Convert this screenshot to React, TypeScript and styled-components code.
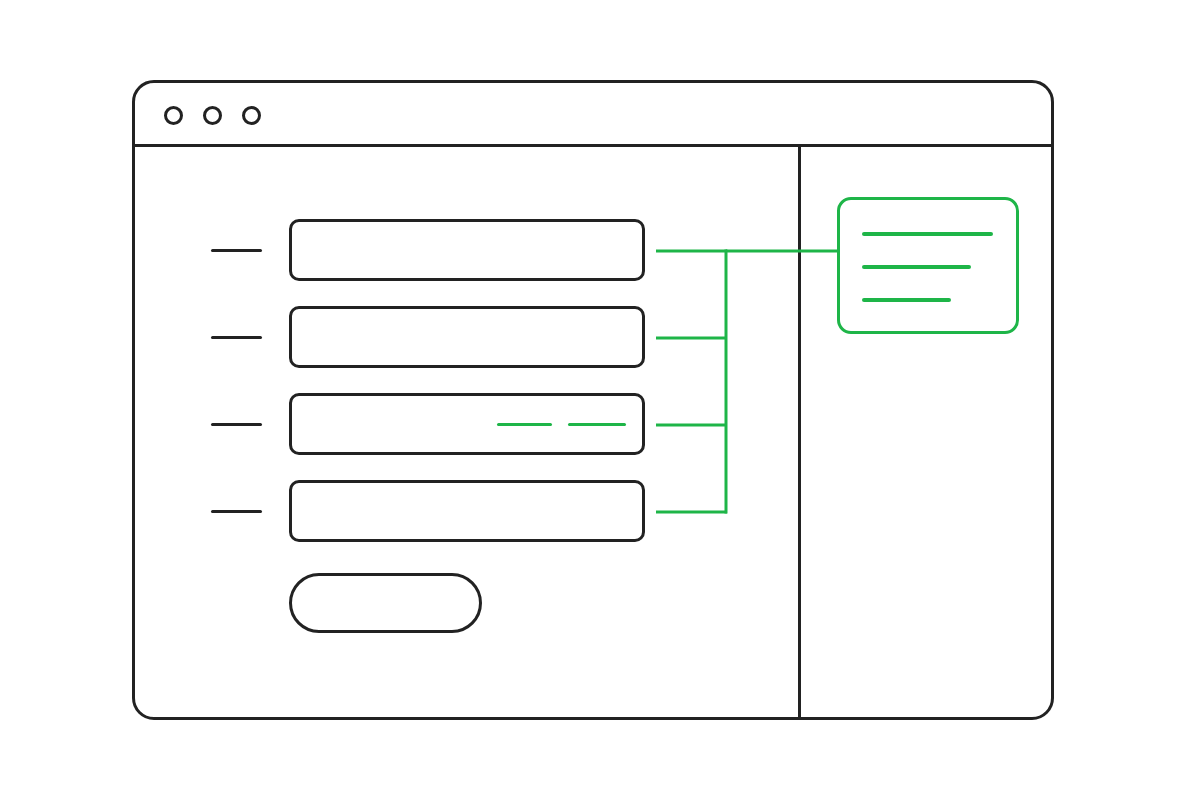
import React from "react";
import styled, { createGlobalStyle } from "styled-components";

const INK = "#222222";
const GREEN = "#1eb548";

const Global = createGlobalStyle`
  html, body { margin: 0; padding: 0; background: #ffffff; }
  body { font-family: "Liberation Sans", Arial, sans-serif; }
`;

const Page = styled.div`
  width: 1200px;
  height: 800px;
  box-sizing: border-box;
  padding: 80px 0 0 132px;
  background: #ffffff;
`;

const Window = styled.div`
  width: 922px;
  height: 640px;
  box-sizing: border-box;
  border: 3px solid ${INK};
  border-radius: 22px;
  display: flex;
  flex-direction: column;
  overflow: hidden;
`;

const TitleBar = styled.div`
  height: 58px;
  flex: 0 0 auto;
  border-bottom: 3px solid ${INK};
  display: flex;
  align-items: center;
  gap: 20px;
  padding: 3px 0 0 29px;
  box-sizing: content-box;
`;

const Dot = styled.span`
  width: 19px;
  height: 19px;
  box-sizing: border-box;
  border: 3px solid ${INK};
  border-radius: 50%;
`;

const Body = styled.div`
  position: relative;
  flex: 1 1 auto;
  display: flex;
`;

const Main = styled.div`
  width: 663px;
  box-sizing: border-box;
  padding: 72px 0 0 76px;
  display: flex;
  flex-direction: column;
  gap: 25px;
`;

const Row = styled.div`
  display: flex;
  align-items: center;
  gap: 27px;
`;

const Label = styled.span`
  width: 51px;
  height: 3px;
  border-radius: 2px;
  background: ${INK};
`;

const Field = styled.div`
  width: 356px;
  height: 62px;
  box-sizing: border-box;
  border: 3px solid ${INK};
  border-radius: 10px;
  display: flex;
  align-items: center;
  justify-content: flex-end;
  gap: 16px;
  padding-right: 16px;
`;

const Typed = styled.span<{ $w: number }>`
  width: ${(p) => p.$w}px;
  height: 3px;
  border-radius: 2px;
  background: ${GREEN};
`;

const Submit = styled.div`
  margin: 6px 0 0 78px;
  width: 193px;
  height: 60px;
  box-sizing: border-box;
  border: 3px solid ${INK};
  border-radius: 30px;
`;

const Sidebar = styled.div`
  flex: 1 1 auto;
  border-left: 3px solid ${INK};
  padding: 50px 0 0 36px;
`;

const Card = styled.div`
  width: 182px;
  height: 137px;
  box-sizing: border-box;
  border: 3px solid ${GREEN};
  border-radius: 14px;
  padding: 32px 0 0 22px;
  display: flex;
  flex-direction: column;
  gap: 29px;
`;

const CardLine = styled.span<{ $w: number }>`
  width: ${(p) => p.$w}px;
  height: 4px;
  border-radius: 2px;
  background: ${GREEN};
`;

const Connectors = styled.svg`
  position: absolute;
  left: 0;
  top: 0;
  width: 720px;
  height: 400px;
  pointer-events: none;
  overflow: visible;
`;

export default function App() {
  const rows = [104, 191, 278, 365];
  return (
    <>
      <Global />
      <Page>
        <Window>
          <TitleBar>
            <Dot />
            <Dot />
            <Dot />
          </TitleBar>
          <Body>
            <Main>
              {rows.map((_, i) => (
                <Row key={i}>
                  <Label />
                  <Field>
                    {i === 2 && (
                      <>
                        <Typed $w={55} />
                        <Typed $w={58} />
                      </>
                    )}
                  </Field>
                </Row>
              ))}
              <Submit />
            </Main>
            <Sidebar>
              <Card>
                <CardLine $w={131} />
                <CardLine $w={109} />
                <CardLine $w={89} />
              </Card>
            </Sidebar>
            <Connectors viewBox="0 0 720 400">
              <g stroke={GREEN} strokeWidth={3} fill="none" strokeLinecap="butt">
                {rows.map((y) => (
                  <line key={y} x1={521} y1={y} x2={592} y2={y} />
                ))}
                <line x1={591} y1={102.5} x2={591} y2={366.5} />
                <line x1={591} y1={104} x2={703} y2={104} />
              </g>
            </Connectors>
          </Body>
        </Window>
      </Page>
    </>
  );
}
